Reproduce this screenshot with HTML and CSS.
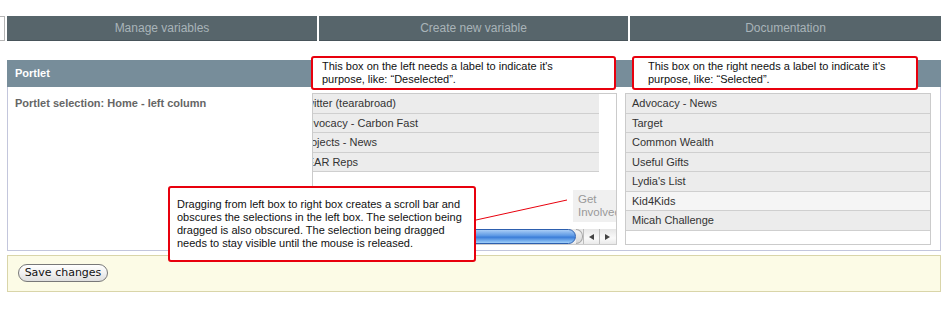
FILE: index.html
```html
<!DOCTYPE html>
<html lang="en">
  <head>
    <meta charset="UTF-8" />
    <meta name="viewport" content="width=device-width, initial-scale=1.0" />
    <title>Portlet variables</title>
    <link rel="stylesheet" href="styles.css">
  </head>
  <body>
    <div class="page">
      <div class="tabs">
        <div class="tab-stub"></div>
        <div class="tab tab-manage">Manage variables</div>
        <div class="tab tab-create">Create new variable</div>
        <div class="tab tab-docs">Documentation</div>
      </div>

      <div class="portlet">
        <div class="portlet-head">Portlet</div>
        <div class="portlet-body">
          <div class="portlet-label">Portlet selection: Home - left column</div>

          <!-- deselected (scrolled sideways while dragging) -->
          <div class="listbox">
            <ul class="items items-scrolled">
              <li class="item">Twitter (tearabroad)</li>
              <li class="item">Advocacy - Carbon Fast</li>
              <li class="item">Projects - News</li>
              <li class="item">TEAR Reps</li>
            </ul>
            <div class="drag-item">Get<br>Involved</div>
            <div class="hscroll">
              <div class="hscroll-thumb"></div>
              <div class="hscroll-cap"></div>
              <div class="hscroll-btn"><span class="arrow arrow-left"></span></div>
              <div class="hscroll-btn"><span class="arrow arrow-right"></span></div>
            </div>
          </div>

          <!-- selected -->
          <div class="listbox">
            <ul class="items">
              <li class="item">Advocacy - News</li>
              <li class="item">Target</li>
              <li class="item">Common Wealth</li>
              <li class="item">Useful Gifts</li>
              <li class="item">Lydia's List</li>
              <li class="item item_hover">Kid4Kids</li>
              <li class="item">Micah Challenge</li>
            </ul>
          </div>
        </div>
      </div>

      <div class="save-bar">
        <button class="save-btn">Save changes</button>
      </div>

      <svg class="note-line" width="951" height="310">
        <line x1="476" y1="220" x2="567" y2="200" stroke="#e8000d" stroke-width="1" />
      </svg>

      <div class="note note-left">This box on the left needs a label to indicate it's<br>purpose, like: “Deselected”.</div>
      <div class="note note-right">This box on the right needs a label to indicate it's<br>purpose, like: “Selected”.</div>
      <div class="note note-drag">Dragging from left box to right box creates a scroll bar and<br>obscures the selections in the left box. The selection being<br>dragged is also obscured. The selection being dragged<br>needs to stay visible until the mouse is released.</div>
    </div>
  </body>
</html>
```

FILE: styles.css
```css
body {
  margin: 0;
  background: #fff;
  font-family: "Liberation Sans", Arial, sans-serif;
}

.page {
  position: relative;
  width: 951px;
  height: 310px;
  padding-top: 16px;
  box-sizing: border-box;
}

/* tabs */
.tabs {
  display: flex;
  gap: 2px;
  height: 25px;
}

.tab-stub {
  width: 5px;
  box-sizing: border-box;
  border: 1px solid #b5b5b5;
  border-left: none;
  background: #fff;
}

.tab {
  box-sizing: border-box;
  background: #57656b;
  border-bottom: 1px solid #48545a;
  color: #a9b4b9;
  font-size: 12px;
  line-height: 25px;
  text-align: center;
}

.tab-manage {
  width: 310px;
}

.tab-create {
  width: 309px;
}

.tab-docs {
  width: 311px;
}

/* portlet panel */
.portlet {
  margin: 19px 0 0 7px;
  width: 934px;
}

.portlet-head {
  height: 27px;
  line-height: 27px;
  padding-left: 8px;
  background: #778d9a;
  color: #fff;
  font-size: 11px;
  font-weight: bold;
}

.portlet-body {
  display: grid;
  grid-template-columns: 1fr 305px 306px;
  gap: 8px;
  padding: 6px 9px 5px 7px;
  border: 1px solid #c3c6dc;
  border-top: none;
}

.portlet-label {
  padding-top: 3px;
  line-height: 14px;
  font-size: 11px;
  font-weight: bold;
  color: #666;
}

.listbox {
  position: relative;
  height: 152px;
  box-sizing: border-box;
  border: 1px solid #cbcbcb;
  background: #fff;
  overflow: hidden;
}

.items {
  list-style: none;
  margin: 0;
  padding: 0;
}

.items-scrolled {
  width: 305px;
  margin-left: -19px;
}

.item {
  height: 18.5px;
  line-height: 18.5px;
  padding-left: 6px;
  border-bottom: 1px solid #cfcfcf;
  background: #ececec;
  color: #333;
  font-size: 11px;
  white-space: nowrap;
}

.item_hover {
  background: #f5f5f5;
}

/* item being dragged, stuck at the edge of the box */
.drag-item {
  position: absolute;
  left: 260px;
  top: 96px;
  width: 60px;
  height: 32px;
  box-sizing: border-box;
  padding: 3px 0 0 5px;
  background: #f0f0f0;
  color: #999;
  font-size: 11.5px;
  line-height: 13px;
}

.hscroll {
  position: absolute;
  left: 0;
  right: 0;
  bottom: 0;
  height: 15px;
  display: flex;
  align-items: stretch;
  background: linear-gradient(#e6e6e6, #fafafa 60%, #e9e9e9);
}

.hscroll-thumb {
  width: 259px;
  margin-left: 4px;
  box-sizing: border-box;
  border: 1px solid #2d5fae;
  border-radius: 0 8px 8px 0;
  background: linear-gradient(#a9cdf6, #5a97e4 45%, #3a7cd8 55%, #9fd0fb);
}

.hscroll-cap {
  width: 7px;
  box-sizing: border-box;
  border: 1px solid #a7a7a7;
  border-left: none;
  border-radius: 0 7px 7px 0;
  background: linear-gradient(#f4f4f4, #d6d6d6);
}

.hscroll-btn {
  width: 15px;
  display: flex;
  align-items: center;
  justify-content: center;
  border-left: 1px solid #bdbdbd;
}

.arrow {
  width: 0;
  height: 0;
  border-top: 3.5px solid transparent;
  border-bottom: 3.5px solid transparent;
}

.arrow-left {
  border-right: 5px solid #444;
}

.arrow-right {
  border-left: 5px solid #444;
}

/* save bar */
.save-bar {
  margin: 4px 0 0 7px;
  width: 934px;
  height: 37px;
  box-sizing: border-box;
  padding: 8px 10px 0;
  border: 1px solid #d9d5a9;
  background: #fcfbe6;
}

.save-btn {
  display: block;
  width: 90px;
  height: 18px;
  padding: 0;
  border: 1px solid #787878;
  border-radius: 9px;
  background: linear-gradient(#ffffff, #f1f1f1 50%, #dedede);
  color: #111;
  font-family: "DejaVu Sans", sans-serif;
  font-size: 11px;
  line-height: 16px;
}

/* review notes drawn over the page */
.note-line {
  position: absolute;
  left: 0;
  top: 0;
  pointer-events: none;
}

.note {
  position: absolute;
  box-sizing: border-box;
  border: 2px solid #e8000d;
  border-radius: 3px;
  background: #fff;
  color: #111;
  font-size: 11px;
  line-height: 13px;
  white-space: nowrap;
}

.note-left {
  left: 311px;
  top: 56px;
  width: 305px;
  height: 34px;
  padding: 2px 0 0 9px;
}

.note-right {
  left: 632px;
  top: 56px;
  width: 286px;
  height: 34px;
  padding: 2px 0 0 14px;
}

.note-drag {
  left: 168px;
  top: 186px;
  width: 308px;
  height: 76px;
  padding: 10px 0 0 7px;
}
```
